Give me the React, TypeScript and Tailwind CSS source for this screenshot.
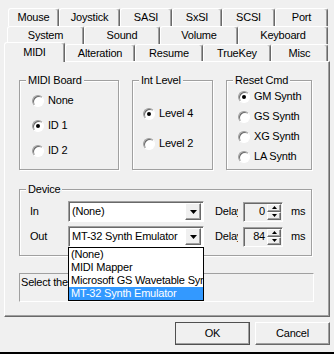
import React from 'react';

const raised =
  'border border-t-white border-l-white border-r-[#696969] border-b-[#696969] shadow-[inset_-1px_-1px_0_#a0a0a0]';
const sunken =
  'border border-t-[#a0a0a0] border-l-[#a0a0a0] border-r-white border-b-white shadow-[inset_1px_1px_0_#696969]';

function Tab({ label, className, selected }: { label: string; className: string; selected?: boolean }) {
  return (
    <div
      className={
        'flex items-center justify-center bg-[#f0f0f0] border-l border-t border-r border-white border-r-[#696969] rounded-t-[3px] shadow-[inset_-1px_0_0_#a0a0a0] ' +
        (selected ? 'relative z-10 h-[20px] -mt-[2px] ' : 'h-full ') +
        className
      }
    >
      {label}
    </div>
  );
}

function Radio({ label, checked }: { label: string; checked?: boolean }) {
  return (
    <div className="flex items-center gap-[4px] h-[13px]">
      <span
        className={
          'w-[12px] h-[12px] rounded-full bg-white flex items-center justify-center ' + sunken
        }
      >
        {checked && <span className="w-[4px] h-[4px] rounded-full bg-black" />}
      </span>
      <span>{label}</span>
    </div>
  );
}

function Group({ title, className, children }: { title: string; className: string; children?: React.ReactNode }) {
  return (
    <div
      className={
        'flex flex-col border border-[#a0a0a0] shadow-[inset_1px_1px_0_#fff,1px_1px_0_#fff] ' + className
      }
    >
      <span className="self-start -mt-[7px] ml-[6px] px-[2px] bg-[#f0f0f0] h-[13px]">{title}</span>
      {children}
    </div>
  );
}

function Arrow({ up, size }: { up?: boolean; size: number }) {
  const h = Math.ceil(size / 2);
  return (
    <svg width={size} height={h} viewBox={`0 0 ${size} ${h}`}>
      <polygon points={up ? `0,${h} ${size},${h} ${size / 2},0` : `0,0 ${size},0 ${size / 2},${h}`} fill="#000" />
    </svg>
  );
}

function Combo({ value }: { value: string }) {
  return (
    <div className={'w-[136px] h-[21px] bg-white flex items-center ' + sunken}>
      <span className="flex-1 pl-[3px] whitespace-nowrap overflow-hidden">{value}</span>
      <span className={'w-[16px] h-[17px] mr-[2px] bg-[#f0f0f0] flex items-center justify-center ' + raised}>
        <Arrow size={7} />
      </span>
    </div>
  );
}

function Spin({ value }: { value: string }) {
  return (
    <div className={'w-[40px] h-[20px] bg-[#f0f0f0] flex items-center ' + sunken}>
      <span className="flex-1 text-right pr-[2px]">{value}</span>
      <div className="flex flex-col w-[14px] h-[16px] mr-[1px]">
        <span className={'flex-1 flex items-center justify-center bg-[#f0f0f0] ' + raised}>
          <Arrow up size={5} />
        </span>
        <span className={'flex-1 flex items-center justify-center bg-[#f0f0f0] ' + raised}>
          <Arrow size={5} />
        </span>
      </div>
    </div>
  );
}

const outDevices = ['(None)', 'MIDI Mapper', 'Microsoft GS Wavetable Synth', 'MT-32 Synth Emulator'];

export default function App() {
  return (
    <div className="w-[334px] h-[354px] bg-[#f0f0f0] flex flex-col text-[11px] leading-[13px] tracking-[-0.2px] text-black font-['Liberation_Sans',Arial,sans-serif] overflow-hidden">
      {/* tab rows */}
      <div className="pt-[8px] flex flex-col">
        <div className="flex pl-[8px] h-[18px]">
          <Tab label="Mouse" className="w-[51px]" />
          <Tab label="Joystick" className="w-[61px]" />
          <Tab label="SASI" className="w-[52px]" />
          <Tab label="SxSI" className="w-[50px]" />
          <Tab label="SCSI" className="w-[53px]" />
          <Tab label="Port" className="w-[53px]" />
        </div>
        <div className="flex pl-[7px] h-[18px]">
          <Tab label="System" className="w-[77px]" />
          <Tab label="Sound" className="w-[76px]" />
          <Tab label="Volume" className="w-[78px]" />
          <Tab label="Keyboard" className="w-[90px]" />
        </div>
        <div className="flex items-start pl-[4px] h-[17px]">
          <Tab label="MIDI" className="w-[61px]" selected />
          <Tab label="Alteration" className="w-[70px]" />
          <Tab label="Resume" className="w-[68px]" />
          <Tab label="TrueKey" className="w-[68px]" />
          <Tab label="Misc" className="w-[57px]" />
        </div>
      </div>

      {/* tab page */}
      <div className={'ml-[4px] w-[326px] h-[256px] flex flex-col pl-[14px] pt-[18px] ' + raised}>
        <div className="flex gap-[13px]">
          <Group title="MIDI Board" className="w-[100px] h-[90px]">
            <div className="flex flex-col gap-[12px] mt-[7px] pl-[12px]">
              <Radio label="None" />
              <Radio label="ID 1" checked />
              <Radio label="ID 2" />
            </div>
          </Group>
          <Group title="Int Level" className="w-[81px] h-[90px]">
            <div className="flex flex-col gap-[17px] mt-[20px] pl-[10px]">
              <Radio label="Level 4" checked />
              <Radio label="Level 2" />
            </div>
          </Group>
          <Group title="Reset Cmd" className="w-[86px] h-[90px]">
            <div className="flex flex-col gap-[7px] mt-[3px] pl-[11px]">
              <Radio label="GM Synth" checked />
              <Radio label="GS Synth" />
              <Radio label="XG Synth" />
              <Radio label="LA Synth" />
            </div>
          </Group>
        </div>

        <Group title="Device" className="w-[293px] h-[67px] mt-[19px]">
          <div className="flex flex-col gap-[4px] mt-[5px] pl-[10px]">
            <div className="flex items-center h-[21px]">
              <span className="w-[38px]">In</span>
              <Combo value="(None)" />
              <span className="ml-[11px] w-[23px] overflow-hidden whitespace-nowrap">Delay</span>
              <span className="ml-[5px]">
                <Spin value="0" />
              </span>
              <span className="ml-[8px]">ms</span>
            </div>
            <div className="flex items-center h-[21px]">
              <span className="w-[38px]">Out</span>
              <div className="relative z-20">
                <Combo value="MT-32 Synth Emulator" />
                <ul className="absolute left-0 top-full w-[136px] bg-white border border-black">
                  {outDevices.map((d, i) => (
                    <li
                      key={d}
                      className={
                        'h-[13px] px-[2px] whitespace-nowrap overflow-hidden ' +
                        (i === 3 ? 'bg-[#3399ff] text-white' : '')
                      }
                    >
                      {d}
                    </li>
                  ))}
                </ul>
              </div>
              <span className="ml-[11px] w-[23px] overflow-hidden whitespace-nowrap">Delay</span>
              <span className="ml-[5px]">
                <Spin value="84" />
              </span>
              <span className="ml-[8px]">ms</span>
            </div>
          </div>
        </Group>

        <div className="w-[295px] h-[29px] mt-[17px] border border-t-[#a0a0a0] border-l-[#a0a0a0] border-r-white border-b-white pl-[1px] pt-[2px]">
          Select the
        </div>
      </div>

      {/* buttons */}
      <div className="flex justify-end gap-[5px] pr-[4px] mt-[5px]">
        <button className={'w-[75px] h-[23px] bg-[#f0f0f0] outline outline-1 outline-[#505050] -outline-offset-1 ' + raised}>
          OK
        </button>
        <button className={'w-[75px] h-[23px] bg-[#f0f0f0] ' + raised}>Cancel</button>
      </div>

      <div className="mt-auto h-[2px] bg-black" />
    </div>
  );
}
